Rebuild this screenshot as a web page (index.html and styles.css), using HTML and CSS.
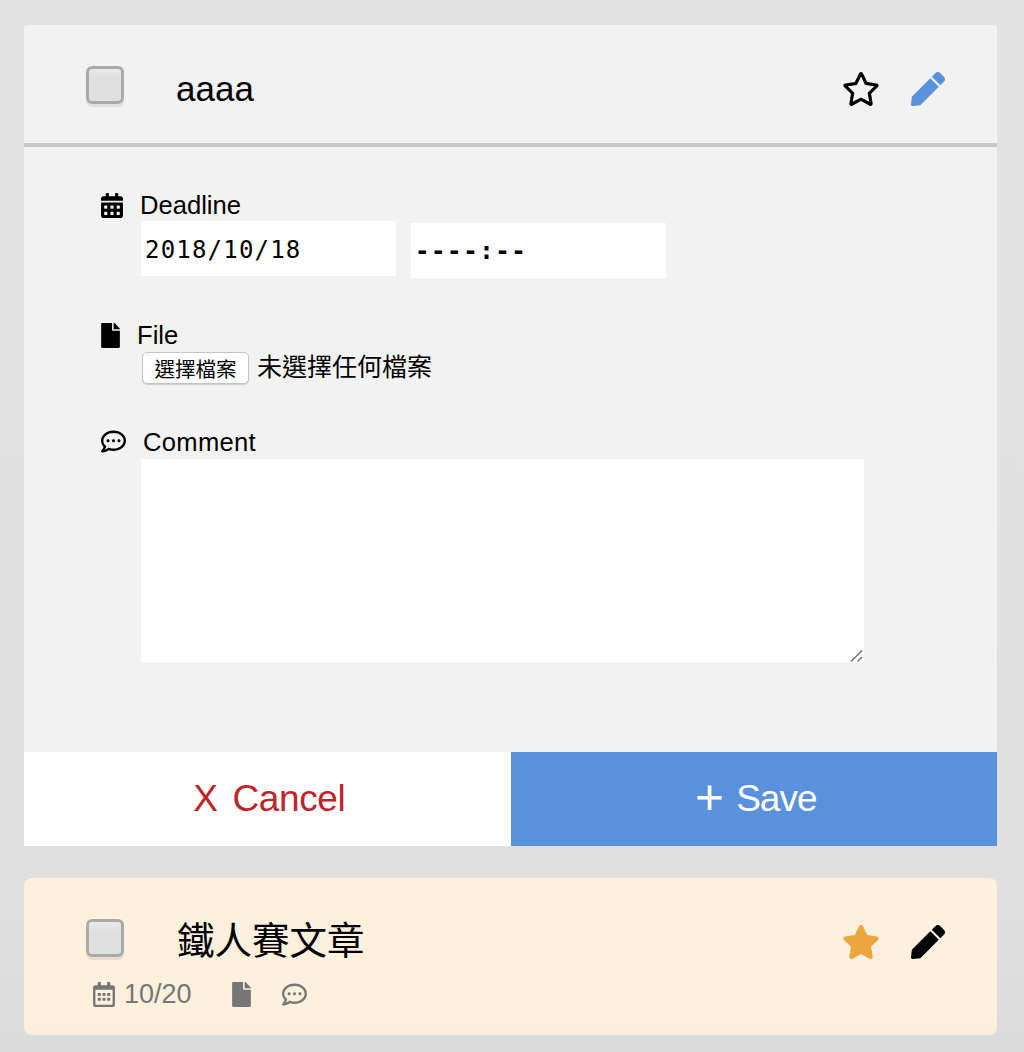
FILE: index.html
```html
<!DOCTYPE html>
<html lang="en">

<head>
    <meta charset="UTF-8">
    <meta name="viewport" content="width=device-width, initial-scale=1.0">
    <title>Todo List</title>
    <link rel="stylesheet" href="styles.css">
</head>

<body>

    <!-- Icon definitions used by the cards -->
    <svg class="icon-defs" xmlns="http://www.w3.org/2000/svg">
        <symbol id="i-star" viewBox="0 0 576 512"><path d="M528.1 171.5L382 150.2 316.7 17.8c-11.7-23.6-45.6-23.9-57.4 0L194 150.2 47.9 171.5c-26.2 3.8-36.7 36.1-17.7 54.6l105.7 103-25 145.5c-4.5 26.3 23.2 46 46.4 33.7L288 439.6l130.7 68.7c23.2 12.2 50.9-7.4 46.4-33.7l-25-145.5 105.7-103c19-18.5 8.5-50.8-17.7-54.6zM388.6 312.3l23.7 138.4L288 385.4l-124.3 65.3 23.7-138.4-100.6-98 139-20.2 62.2-126 62.2 126 139 20.2-100.6 98z"/></symbol>
        <symbol id="i-star-solid" viewBox="0 0 576 512"><path d="M259.3 17.8L194 150.2 47.9 171.5c-26.2 3.8-36.7 36.1-17.7 54.6l105.7 103-25 145.5c-4.5 26.3 23.2 46 46.4 33.7L288 439.6l130.7 68.7c23.2 12.2 50.9-7.4 46.4-33.7l-25-145.5 105.7-103c19-18.5 8.5-50.8-17.7-54.6L382 150.2 316.7 17.8c-11.7-23.6-45.6-23.9-57.4 0z"/></symbol>
        <symbol id="i-pen" viewBox="0 0 512 512"><path d="M290.74 93.24l128.02 128.02-277.99 277.99-114.14 12.6C11.35 513.54-1.56 500.62.14 485.34l12.7-114.22 277.9-278.88zm207.2-19.06l-60.11-60.11c-18.75-18.75-49.16-18.75-67.91 0l-56.55 56.55 128.02 128.02 56.55-56.55c18.75-18.76 18.75-49.16 0-67.91z"/></symbol>
        <symbol id="i-calendar-solid" viewBox="0 0 448 512"><path d="M0 464c0 26.5 21.5 48 48 48h352c26.5 0 48-21.5 48-48V192H0v272zm320-196c0-6.6 5.4-12 12-12h40c6.6 0 12 5.4 12 12v40c0 6.6-5.4 12-12 12h-40c-6.6 0-12-5.4-12-12v-40zm0 128c0-6.6 5.4-12 12-12h40c6.6 0 12 5.4 12 12v40c0 6.6-5.4 12-12 12h-40c-6.6 0-12-5.4-12-12v-40zM192 268c0-6.6 5.4-12 12-12h40c6.6 0 12 5.4 12 12v40c0 6.6-5.4 12-12 12h-40c-6.6 0-12-5.4-12-12v-40zm0 128c0-6.6 5.4-12 12-12h40c6.6 0 12 5.4 12 12v40c0 6.6-5.4 12-12 12h-40c-6.6 0-12-5.4-12-12v-40zM64 268c0-6.6 5.4-12 12-12h40c6.6 0 12 5.4 12 12v40c0 6.6-5.4 12-12 12H76c-6.6 0-12-5.4-12-12v-40zm0 128c0-6.6 5.4-12 12-12h40c6.6 0 12 5.4 12 12v40c0 6.6-5.4 12-12 12H76c-6.6 0-12-5.4-12-12v-40zM400 64h-48V16c0-8.8-7.2-16-16-16h-32c-8.8 0-16 7.2-16 16v48H160V16c0-8.8-7.2-16-16-16h-32c-8.8 0-16 7.2-16 16v48H48C21.5 64 0 85.5 0 112v48h448v-48c0-26.5-21.5-48-48-48z"/></symbol>
        <symbol id="i-calendar" viewBox="0 0 448 512"><path d="M148 288h-40c-6.6 0-12-5.4-12-12v-40c0-6.6 5.4-12 12-12h40c6.6 0 12 5.4 12 12v40c0 6.6-5.4 12-12 12zm108-12v-40c0-6.6-5.4-12-12-12h-40c-6.6 0-12 5.4-12 12v40c0 6.6 5.4 12 12 12h40c6.6 0 12-5.4 12-12zm96 0v-40c0-6.6-5.4-12-12-12h-40c-6.6 0-12 5.4-12 12v40c0 6.6 5.4 12 12 12h40c6.6 0 12-5.4 12-12zm-96 96v-40c0-6.6-5.4-12-12-12h-40c-6.6 0-12 5.4-12 12v40c0 6.6 5.4 12 12 12h40c6.6 0 12-5.4 12-12zm-96 0v-40c0-6.6-5.4-12-12-12h-40c-6.6 0-12 5.4-12 12v40c0 6.6 5.4 12 12 12h40c6.6 0 12-5.4 12-12zm192 0v-40c0-6.6-5.4-12-12-12h-40c-6.6 0-12 5.4-12 12v40c0 6.6 5.4 12 12 12h40c6.6 0 12-5.4 12-12zm96-260v352c0 26.5-21.5 48-48 48H48c-26.5 0-48-21.5-48-48V112c0-26.5 21.5-48 48-48h48V12c0-6.6 5.4-12 12-12h40c6.6 0 12 5.4 12 12v52h128V12c0-6.6 5.4-12 12-12h40c6.6 0 12 5.4 12 12v52h48c26.5 0 48 21.5 48 48zm-48 346V160H48v298c0 3.3 2.7 6 6 6h340c3.3 0 6-2.7 6-6z"/></symbol>
        <symbol id="i-file" viewBox="0 0 384 512"><path d="M224 136V0H24C10.7 0 0 10.7 0 24v464c0 13.3 10.7 24 24 24h336c13.3 0 24-10.7 24-24V160H248c-13.2 0-24-10.8-24-24zm160-14.1v6.1H256V0h6.1c6.4 0 12.5 2.5 17 7l97.9 98c4.5 4.5 7 10.6 7 16.9z"/></symbol>
        <symbol id="i-comment" viewBox="0 0 512 512"><path d="M144 208c-17.7 0-32 14.3-32 32s14.3 32 32 32 32-14.3 32-32-14.3-32-32-32zm112 0c-17.7 0-32 14.3-32 32s14.3 32 32 32 32-14.3 32-32-14.3-32-32-32zm112 0c-17.7 0-32 14.3-32 32s14.3 32 32 32 32-14.3 32-32-14.3-32-32-32zM256 32C114.6 32 0 125.1 0 240c0 47.6 19.9 91.2 52.9 126.3C38 405.7 7 439.1 6.5 439.5c-6.6 7-8.4 17.2-4.6 26S14.4 480 24 480c61.5 0 110-25.7 139.1-46.3C192 442.8 223.2 448 256 448c141.4 0 256-93.1 256-208S397.4 32 256 32zm0 368c-26.7 0-53.1-4.1-78.4-12.1l-22.7-7.2-19.5 13.8c-14.3 10.1-33.9 21.4-57.5 29 7.3-12.1 14.4-25.7 19.9-40.2l10.6-28.1-20.6-21.8C69.7 314.1 48 282.2 48 240c0-88.2 93.3-160 208-160s208 71.8 208 160-93.3 160-208 160z"/></symbol>
    </svg>

    <div class="container">
        <!-- Task being edited -->
        <div class="card">
            <div class="card-head">
                <span class="check"></span>
                <div class="title">aaaa</div>
                <div class="actions">
                    <svg class="icon-star"><use href="#i-star"></use></svg>
                    <svg class="icon-pen pen-blue"><use href="#i-pen"></use></svg>
                </div>
            </div>

            <div class="form-body">
                <div class="field">
                    <div class="label">
                        <svg class="icon-calendar"><use href="#i-calendar-solid"></use></svg>
                        <span>Deadline</span>
                    </div>
                    <div class="date-row">
                        <input class="date-input" type="text" value="2018/10/18">
                        <input class="date-input time-input" type="text" value="----:--">
                    </div>
                </div>

                <div class="field field-file">
                    <div class="label">
                        <svg class="icon-file"><use href="#i-file"></use></svg>
                        <span>File</span>
                    </div>
                    <div class="file-row">
                        <button class="file-button">選擇檔案</button>
                        <span class="file-name">未選擇任何檔案</span>
                    </div>
                </div>

                <div class="field">
                    <div class="label label-comment">
                        <svg class="icon-comment"><use href="#i-comment"></use></svg>
                        <span>Comment</span>
                    </div>
                    <div class="comment-wrap">
                        <textarea class="comment-box"></textarea>
                        <!-- Resize grip in the corner of the textarea -->
                        <svg class="grip" viewBox="0 0 13 13"><path d="M1 12.5L12 1.5M7.5 12.5L12 8"></path></svg>
                    </div>
                </div>
            </div>

            <div class="card-foot">
                <button class="foot-button cancel"><span class="foot-mark">X</span>Cancel</button>
                <button class="foot-button save"><span class="foot-mark mark-plus">+</span>Save</button>
            </div>
        </div>

        <!-- Starred task -->
        <div class="card card-starred">
            <div class="card-head">
                <span class="check"></span>
                <div class="title title-cjk">鐵人賽文章</div>
                <div class="actions">
                    <svg class="icon-star star-orange"><use href="#i-star-solid"></use></svg>
                    <svg class="icon-pen"><use href="#i-pen"></use></svg>
                </div>
            </div>
            <div class="meta">
                <svg class="icon-calendar"><use href="#i-calendar"></use></svg>
                <span class="meta-date">10/20</span>
                <svg class="icon-file"><use href="#i-file"></use></svg>
                <svg class="icon-comment"><use href="#i-comment"></use></svg>
            </div>
        </div>
    </div>

</body>

</html>
```

FILE: styles.css
```css
/* Reset */
* {
    margin: 0;
    padding: 0;
    box-sizing: border-box;
    font-family: "Liberation Sans", "Noto Sans CJK TC", sans-serif;
}

body {
    background: linear-gradient(#e2e2e2, #e0e0e0 85%, #dbdbdb);
    color: #000;
    height: 1052px;
    overflow: hidden;
}

.icon-defs {
    display: none;
}

svg {
    fill: currentColor;
    flex: none;
}

/* Cards */
.container {
    padding: 25px 27px 0 24px;
}

.card {
    background: #f2f2f2;
    border-radius: 3px 3px 0 0;
    margin-bottom: 32px;
}

.card-starred {
    background: linear-gradient(#fdf1dd 88%, #f9eedb);
    border-radius: 8px;
    height: 157px;
    padding-top: 41px;
}

.card-head {
    display: flex;
    align-items: flex-start;
    height: 122px;
    padding: 41px 52px 0 62px;
    border-bottom: 4px solid #c8c8c8;
}

.card-starred .card-head {
    height: 38px;
    padding-top: 0;
    border-bottom: none;
}

/* Checkbox */
.check {
    width: 38px;
    height: 38px;
    border: 3px solid #aaa;
    border-radius: 6px;
    background: linear-gradient(#e9e9e9, #e0e0e0 30%);
    box-shadow: 0 3px 1px rgba(0, 0, 0, 0.08);
    flex: none;
}

.title {
    flex: 1;
    margin-left: 52px;
    padding-top: 1px;
    font-size: 35px;
    line-height: 44px;
}

.title-cjk {
    padding: 0 0 0 1px;
    font-size: 37.5px;
}

.actions {
    display: flex;
    gap: 31px;
    margin-top: 6px;
}

.icon-star {
    width: 38px;
    height: 34px;
}

.icon-pen {
    width: 34px;
    height: 34px;
}

.pen-blue {
    color: #5a91dc;
}

.star-orange {
    color: #eba63e;
}

/* Form */
.form-body {
    height: 605px;
    padding: 43px 0 0 77px;
}

.field {
    margin-bottom: 42px;
}

.field-file {
    margin-bottom: 43px;
}

.label {
    display: flex;
    align-items: center;
    gap: 17px;
    height: 31px;
    font-size: 25.6px;
}

.label-comment span {
    letter-spacing: 0.3px;
}

.label-comment svg {
    margin-top: -2px;
}

.icon-calendar {
    width: 22px;
    height: 25px;
}

.icon-file {
    width: 19px;
    height: 25px;
}

.icon-comment {
    width: 25px;
    height: 25px;
}

.date-row {
    display: flex;
    align-items: flex-start;
    gap: 15px;
    margin-left: 40px;
}

.date-input {
    width: 255px;
    height: 55px;
    padding: 2px 0 0 4px;
    border: none;
    outline: none;
    background: #fff;
    font-family: "DejaVu Sans Mono", monospace;
    font-size: 24px;
    letter-spacing: 1.2px;
}

.time-input {
    margin-top: 2px;
    padding-top: 0;
    font-weight: bold;
    letter-spacing: 1.6px;
}

.file-row {
    display: flex;
    align-items: flex-start;
    margin-left: 41px;
    height: 32px;
    margin-top: 1px;
}

.file-button {
    width: 107px;
    height: 32px;
    padding-bottom: 2px;
    border: 1px solid #c4c4c4;
    border-radius: 5px;
    background: #fff;
    box-shadow: 0 1px 1px rgba(0, 0, 0, 0.15);
    font-size: 20.5px;
}

.file-name {
    margin-left: 8px;
    font-size: 25px;
    line-height: 30px;
}

.comment-wrap {
    position: relative;
    width: 723px;
    height: 203px;
    margin: 1px 0 0 40px;
}

.comment-box {
    display: block;
    width: 100%;
    height: 100%;
    border: none;
    outline: none;
    background: #fff;
    resize: none;
}

.grip {
    position: absolute;
    right: 1px;
    bottom: 0;
    width: 13px;
    height: 13px;
    fill: none;
    stroke: #666;
    stroke-width: 1.2;
}

/* Footer buttons */
.card-foot {
    display: flex;
    height: 94px;
}

.foot-button {
    flex: 1;
    padding-left: 4px;
    border: none;
    font-size: 37px;
    letter-spacing: -0.4px;
}

.foot-mark {
    margin-right: 15px;
}

.mark-plus {
    margin-right: 13px;
    font-size: 50px;
    font-weight: normal;
    line-height: 0;
    vertical-align: -3px;
}

.cancel {
    background: #fff;
    color: #c0242a;
}

.save {
    background: #5a91dc;
    color: #fff;
    letter-spacing: -1px;
}

/* Second card details */
.meta {
    display: flex;
    align-items: center;
    margin: 22px 0 0 69px;
    color: #767676;
}

.meta-date {
    margin: 0 40px 0 9px;
    font-size: 27px;
}

.meta .icon-file {
    margin-right: 31px;
}
```
